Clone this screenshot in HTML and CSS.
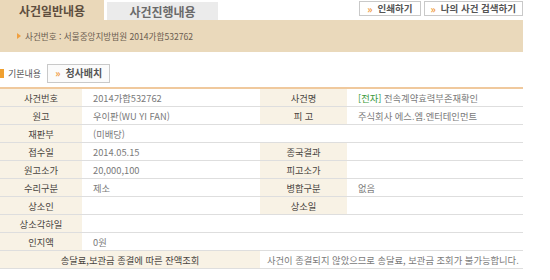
FILE: index.html
```html
<!DOCTYPE html>
<html lang="ko">
<head>
<meta charset="utf-8">
<link rel="stylesheet" href="styles.css">
</head>
<body>
<div class="page">
  <div class="head">
    <div class="tab tab-on">사건일반내용</div>
    <div class="tab tab-off">사건진행내용</div>
    <div class="tools">
      <span class="btn"><span class="arr">»</span>인쇄하기</span>
      <span class="btn"><span class="arr">»</span>나의 사건 검색하기</span>
    </div>
  </div>
  <div class="bar"><span class="tri"></span>사건번호 : 서울중앙지방법원 2014가합532762</div>
  <div class="section">
    <span class="mark"></span>
    <span class="sec-title">기본내용</span>
    <span class="btn btn-big"><span class="arr">»</span>청사배치</span>
  </div>
  <table class="info">
    <colgroup>
      <col class="c1"><col class="c2"><col class="c3"><col class="c4">
    </colgroup>
    <tr><th>사건번호</th><td>2014가합532762</td><th>사건명</th><td><span class="green">[전자]</span> 전속계약효력부존재확인</td></tr>
    <tr><th>원고</th><td>우이판(WU YI FAN)</td><th>피 고</th><td class="ind">주식회사 에스.엠.엔터테인먼트</td></tr>
    <tr><th>재판부</th><td colspan="3">(미배당)</td></tr>
    <tr><th>접수일</th><td>2014.05.15</td><th>종국결과</th><td></td></tr>
    <tr><th>원고소가</th><td>20,000,100</td><th>피고소가</th><td></td></tr>
    <tr><th>수리구분</th><td>제소</td><th>병합구분</th><td>없음</td></tr>
    <tr><th>상소인</th><td></td><th>상소일</th><td></td></tr>
    <tr><th>상소각하일</th><td colspan="3"></td></tr>
    <tr><th>인지액</th><td colspan="3">0원</td></tr>
    <tr><th colspan="2">송달료,보관금 종결에 따른 잔액조회</th><td colspan="2" class="note">사건이 종결되지 않았으므로 송달료, 보관금 조회가 불가능합니다.</td></tr>
  </table>
</div>
</body>
</html>
```
FILE: styles.css
```css
body {
  margin: 0;
  background: #ffffff;
  font-family: "Noto Sans CJK KR", "Noto Sans", sans-serif;
  color: #555555;
}
.page {
  width: 523px;
}
.head {
  display: flex;
  height: 20px;
}
.tab {
  font-size: 12px;
  font-weight: bold;
  display: flex;
  align-items: center;
  justify-content: center;
}
.tab-on {
  width: 104px;
  height: 20px;
  background: #ead8b9;
  color: #5e4e3e;
}
.tab-off {
  width: 111px;
  height: 18px;
  margin-top: 2px;
  margin-left: 3px;
  background: #ebebeb;
  color: #6a6a6a;
}
.tools {
  margin-left: auto;
  display: flex;
  gap: 3px;
  align-items: flex-start;
  padding-top: 1px;
}
.btn {
  display: inline-flex;
  align-items: center;
  height: 13px;
  padding: 0 6px 0 5px;
  border: 1px solid #c9c9c9;
  background: #ffffff;
  font-size: 9.5px;
  font-weight: bold;
  color: #555555;
  line-height: 1;
}
.tools .btn:first-child {
  padding-left: 7px;
  padding-right: 8px;
}
.arr {
  color: #f09a3c;
  font-size: 10px;
  margin-right: 5px;
}
.bar {
  height: 32px;
  background: #ead9bb;
  display: flex;
  align-items: center;
  padding-left: 17px;
  font-size: 8.6px;
  color: #6a5d50;
}
.tri {
  width: 0;
  height: 0;
  border-top: 3px solid transparent;
  border-bottom: 3px solid transparent;
  border-left: 4px solid #f0a040;
  margin-right: 4px;
}
.section {
  display: flex;
  align-items: center;
  height: 20px;
  margin-top: 11px;
  margin-bottom: 4px;
}
.mark {
  width: 4px;
  height: 9px;
  background: #f0a030;
  margin-right: 4px;
}
.sec-title {
  font-size: 9px;
  color: #555555;
  margin-right: 6px;
}
.btn-big {
  height: 17px;
  font-size: 10px;
  padding: 0 7px 0 7px;
  background: #fbfbfb;
}
.info {
  width: 523px;
  border-collapse: collapse;
  border-top: 2px solid #f0c99d;
  font-size: 9.3px;
  table-layout: fixed;
}
.c1 { width: 82px; }
.c2 { width: 178px; }
.c3 { width: 87px; }
.c4 { width: 176px; }
.info th,
.info td {
  height: 17px;
  padding: 0;
  border-bottom: 1px solid #dedede;
  white-space: nowrap;
}
.info th {
  background: #f8f2e5;
  font-weight: normal;
  color: #484440;
  text-align: center;
}
.info td {
  color: #7a7a7a;
  padding-left: 11px;
  text-align: left;
}
.info td.ind {
  padding-left: 11px;
}
.info td.note {
  padding-left: 7px;
}
.green {
  color: #3a9a3a;
}
```
